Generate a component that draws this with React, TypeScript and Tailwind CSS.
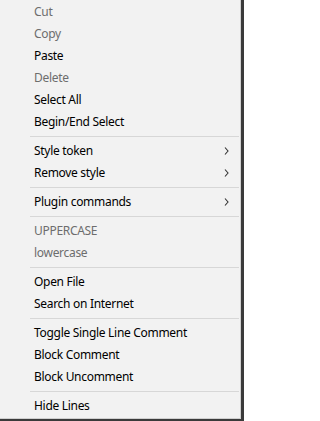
import React from 'react';

type Entry =
  | { kind: 'item'; label: string; disabled?: boolean; submenu?: boolean }
  | { kind: 'sep' };

const entries: Entry[] = [
  { kind: 'item', label: 'Cut', disabled: true },
  { kind: 'item', label: 'Copy', disabled: true },
  { kind: 'item', label: 'Paste' },
  { kind: 'item', label: 'Delete', disabled: true },
  { kind: 'item', label: 'Select All' },
  { kind: 'item', label: 'Begin/End Select' },
  { kind: 'sep' },
  { kind: 'item', label: 'Style token', submenu: true },
  { kind: 'item', label: 'Remove style', submenu: true },
  { kind: 'sep' },
  { kind: 'item', label: 'Plugin commands', submenu: true },
  { kind: 'sep' },
  { kind: 'item', label: 'UPPERCASE', disabled: true },
  { kind: 'item', label: 'lowercase', disabled: true },
  { kind: 'sep' },
  { kind: 'item', label: 'Open File' },
  { kind: 'item', label: 'Search on Internet' },
  { kind: 'sep' },
  { kind: 'item', label: 'Toggle Single Line Comment' },
  { kind: 'item', label: 'Block Comment' },
  { kind: 'item', label: 'Block Uncomment' },
  { kind: 'sep' },
  { kind: 'item', label: 'Hide Lines' },
];

const Chevron = () => (
  <svg width="5" height="8" viewBox="0 0 5 8" className="text-[#333]">
    <path d="M1 0.5 L4 4 L1 7.5" fill="none" stroke="currentColor" strokeWidth="1.1" />
  </svg>
);

export default function App() {
  return (
    <div className="w-[244px] h-[421px] bg-[#3a3a3a] overflow-hidden">
      <div
        className="w-[241px] h-[419px] bg-[#f2f2f2] border-r border-b border-[#cfcfcf] pt-px flex flex-col"
        style={{ fontFamily: '"Noto Sans", "Open Sans", sans-serif' }}
      >
        {entries.map((e, i) =>
          e.kind === 'sep' ? (
            <div key={i} className="h-[7px] flex items-start pt-[3px] pl-[30px] pr-px">
              <div className="h-px w-full bg-[#d7d7d7]" />
            </div>
          ) : (
            <div
              key={i}
              className={
                'h-[22px] flex items-center pl-[34px] pr-[11px] text-[12px] leading-none tracking-[-0.3px] ' +
                (e.disabled ? 'text-[#6d6d6d]' : 'text-black')
              }
            >
              <span className="flex-1">{e.label}</span>
              {e.submenu && <Chevron />}
            </div>
          )
        )}
      </div>
    </div>
  );
}
